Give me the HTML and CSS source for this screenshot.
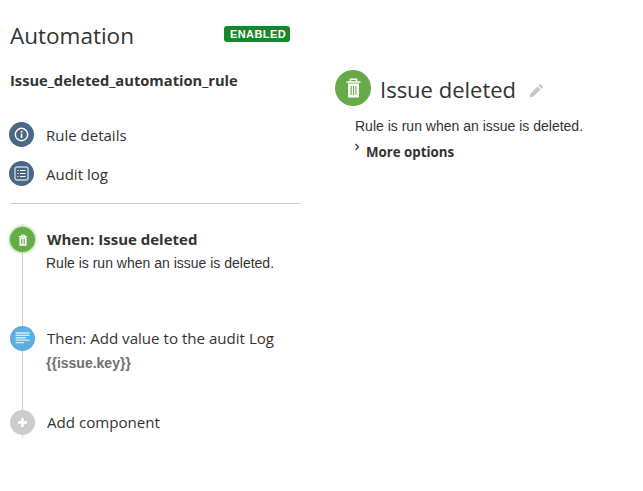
FILE: index.html
```html
<!DOCTYPE html>
<html lang="en">
<head>
    <meta charset="UTF-8">
    <title>Automation</title>
    <link rel="stylesheet" href="styles.css">
</head>
<body>
    <div class="page">
        <div class="sidebar">
            <div class="header">
                <h1>Automation</h1>
                <span class="badge">ENABLED</span>
            </div>
            <div class="rule-name">Issue_deleted_automation_rule</div>
            <div class="nav">
                <div class="nav-item">
                    <span class="circle circle-slate">
                        <svg width="15" height="15" viewBox="0 0 17 17">
                            <circle cx="8.5" cy="8.5" r="7" fill="none" stroke="#fff" stroke-width="1.6"/>
                            <rect x="7.6" y="7.4" width="1.9" height="5" fill="#fff"/>
                            <rect x="7.6" y="4.4" width="1.9" height="1.9" fill="#fff"/>
                        </svg>
                    </span>
                    <span>Rule details</span>
                </div>
                <div class="nav-item">
                    <span class="circle circle-slate">
                        <svg width="15" height="15" viewBox="0 0 15 15">
                            <rect x="1" y="1" width="13" height="13" rx="2" fill="none" stroke="#c9d3de" stroke-width="1.4"/>
                            <path d="M3.5 4.5h1M6 4.5h5.5M3.5 7.5h1M6 7.5h5.5M3.5 10.5h1M6 10.5h5.5" stroke="#fff" stroke-width="1.1"/>
                        </svg>
                    </span>
                    <span>Audit log</span>
                </div>
            </div>
            <div class="steps">
                <div class="step step-first">
                    <div class="rail">
                        <span class="tick"></span>
                        <span class="circle circle-green circle-active">
                            <svg width="10" height="12" viewBox="0 0 11 13">
                                <path d="M1 2.6h9M3.9 2.4V1h3.2v1.4" fill="none" stroke="#fff" stroke-width="1.1"/>
                                <path fill-rule="evenodd" d="M1.6 3.6h7.8v9.2H1.6zM3.4 5.2v5.9h.9V5.2zM5.05 5.2v5.9h.9V5.2zM6.7 5.2v5.9h.9V5.2z" fill="#fff"/>
                            </svg>
                        </span>
                        <span class="line"></span>
                    </div>
                    <div class="step-body">
                        <div class="step-title">When: Issue deleted</div>
                        <div class="step-text">Rule is run when an issue is deleted.</div>
                    </div>
                </div>
                <div class="step step-second">
                    <div class="rail">
                        <span class="circle circle-blue">
                            <svg width="15" height="13" viewBox="0 0 15 14">
                                <path d="M0 1h15M0 3.6h15M0 6.2h11M0 8.8h15M0 11.4h9" stroke="#d9edf9" stroke-width="1.5"/>
                            </svg>
                        </span>
                        <span class="line"></span>
                    </div>
                    <div class="step-body">
                        <div class="step-name">Then: Add value to the audit Log</div>
                        <div class="step-value">{{issue.key}}</div>
                    </div>
                </div>
                <div class="step">
                    <div class="rail">
                        <span class="circle circle-grey">
                            <svg width="11" height="11" viewBox="0 0 11 11">
                                <path d="M5.5 1v9M1 5.5h9" stroke="#fff" stroke-width="2.4"/>
                            </svg>
                        </span>
                        <span class="tick"></span>
                    </div>
                    <div class="step-body">
                        <div class="step-name">Add component</div>
                    </div>
                </div>
            </div>
        </div>
        <div class="detail">
            <div class="detail-head">
                <span class="circle-big">
                    <svg width="15" height="20" viewBox="0 0 15 20">
                        <path d="M.5 4h14M4.5 3.8V1.2h6v2.6" fill="none" stroke="#fff" stroke-width="1.5"/>
                        <path fill-rule="evenodd" d="M2 5.6h11V19.4H2zM4.6 8v9h1.1V8zM7 8v9h1.1V8zM9.4 8v9h1.1V8z" fill="#fff"/>
                    </svg>
                </span>
                <h2>Issue deleted</h2>
                <svg class="pencil" width="15" height="15" viewBox="0 0 15 15">
                    <path d="M11 .8l3.2 3.2-1.7 1.7-3.2-3.2zM8.4 3.4l3.2 3.2-7 7-4 .9.9-4z" fill="#c9c9c9"/>
                </svg>
            </div>
            <div class="detail-text">Rule is run when an issue is deleted.</div>
            <div class="more">
                <svg class="chevron" width="7" height="9" viewBox="0 0 7 9">
                    <path d="M1.5 1l3 3-3 3" fill="none" stroke="#333" stroke-width="1.2"/>
                </svg>
                <span>More options</span>
            </div>
        </div>
    </div>
</body>
</html>
```
FILE: styles.css
```css
body {
    margin: 0;
    background-color: #ffffff;
    color: #333333;
    font-family: "Open Sans", sans-serif;
}

.page {
    display: flex;
    padding: 0 0 0 10px;
}

.sidebar {
    width: 290px;
}

.header {
    display: flex;
    justify-content: space-between;
    align-items: flex-start;
    padding: 20px 10px 0 0;
}

h1 {
    margin: 0;
    font-size: 22.5px;
    font-weight: 400;
    line-height: 32px;
}

.badge {
    margin-top: 6px;
    padding: 0 4px 0 6px;
    height: 16px;
    line-height: 16px;
    border-radius: 3px;
    background-color: #14892c;
    color: #ffffff;
    font-family: "Liberation Sans", sans-serif;
    font-size: 11px;
    font-weight: bold;
    letter-spacing: 0.4px;
}

.rule-name {
    margin-top: 17px;
    font-size: 14.7px;
    font-weight: 700;
    line-height: 22px;
}

.nav {
    margin-top: 24px;
    padding-bottom: 10px;
    border-bottom: 1px solid #cccccc;
}

.nav-item {
    display: flex;
    align-items: center;
    gap: 12px;
    height: 39px;
    margin-left: -1px;
    font-size: 15px;
}

.circle {
    display: flex;
    flex: none;
    justify-content: center;
    align-items: center;
    width: 25px;
    height: 25px;
    border-radius: 50%;
}

.circle-slate { background-color: #4a6785; }
.circle-green { background-color: #67ab49; }
.circle-blue { background-color: #59afe1; }
.circle-grey { background-color: #cccccc; }

.circle-active {
    box-shadow: 0 0 3px 1px #a9d196;
}

.steps {
    padding-top: 20px;
}

.step {
    display: flex;
    gap: 12px;
}

.step-first { height: 102px; }
.step-second { height: 84px; }

.rail {
    display: flex;
    flex-direction: column;
    align-items: center;
    width: 25px;
}

.line {
    flex: 1;
    width: 1px;
    background-color: #cccccc;
}

.tick {
    flex: none;
    width: 1px;
    height: 3px;
    background-color: #dddddd;
}

.step-first .step-body { padding-top: 4px; }

.step-title {
    font-size: 15px;
    font-weight: 700;
    line-height: 22px;
}

.step-text {
    margin: 5px 0 0 -1px;
    font-family: "Liberation Sans", sans-serif;
    font-size: 14px;
    line-height: 16px;
}

.step-name {
    font-size: 15.1px;
    line-height: 25px;
}

.step-value {
    margin: 4px 0 0 -1px;
    color: #707070;
    font-family: "Liberation Sans", sans-serif;
    font-size: 14px;
    font-weight: bold;
    line-height: 16px;
}

.detail {
    margin-left: 35px;
    padding-top: 70px;
}

.detail-head {
    display: flex;
    align-items: flex-start;
    height: 36px;
}

.circle-big {
    display: flex;
    justify-content: center;
    align-items: center;
    width: 36px;
    height: 36px;
    border-radius: 50%;
    background-color: #67ab49;
}

h2 {
    margin: 0 13px 0 9px;
    padding-top: 1px;
    font-size: 22px;
    font-weight: 400;
    line-height: 36px;
}

.pencil {
    margin-top: 13px;
}

.detail-text {
    margin: 12px 0 0 20px;
    font-family: "Liberation Sans", sans-serif;
    font-size: 14px;
    line-height: 16px;
}

.more {
    display: flex;
    gap: 5px;
    margin: 9px 0 0 19px;
    font-size: 13.3px;
    font-weight: 700;
    line-height: 18px;
}
```
